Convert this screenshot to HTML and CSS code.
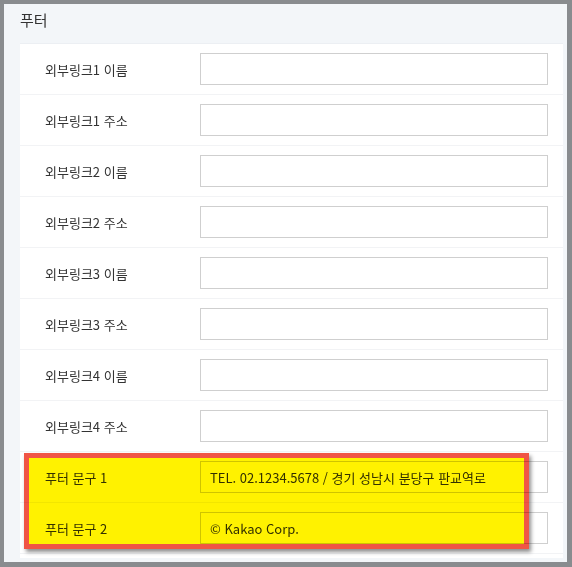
FILE: index.html
```html
<!DOCTYPE html>
<html lang="ko">
<head>
    <meta charset="UTF-8">
    <title>푸터 설정</title>
    <link rel="stylesheet" href="styles.css">
</head>
<body>

<div class="panel">
    <div class="panel-head">푸터</div>

    <div class="panel-body">
        <div class="form-row">
            <label>외부링크1 이름</label>
            <input type="text">
        </div>
        <div class="form-row">
            <label>외부링크1 주소</label>
            <input type="text">
        </div>
        <div class="form-row">
            <label>외부링크2 이름</label>
            <input type="text">
        </div>
        <div class="form-row">
            <label>외부링크2 주소</label>
            <input type="text">
        </div>
        <div class="form-row">
            <label>외부링크3 이름</label>
            <input type="text">
        </div>
        <div class="form-row">
            <label>외부링크3 주소</label>
            <input type="text">
        </div>
        <div class="form-row">
            <label>외부링크4 이름</label>
            <input type="text">
        </div>
        <div class="form-row">
            <label>외부링크4 주소</label>
            <input type="text">
        </div>
        <div class="form-row">
            <label>푸터 문구 1</label>
            <input type="text" value="TEL. 02.1234.5678 / 경기 성남시 분당구 판교역로">
        </div>
        <div class="form-row">
            <label>푸터 문구 2</label>
            <input type="text" value="© Kakao Corp.">
        </div>

        <!-- highlight box over the two footer rows -->
        <div class="highlight"></div>
    </div>
</div>

</body>
</html>
```

FILE: styles.css
```css
* {
    margin: 0;
    padding: 0;
    box-sizing: border-box;
}

body {
    font-family: "Noto Sans CJK KR", "Noto Sans", sans-serif;
    background-color: #898c8f;
    color: #333;
    padding: 4px 5px 5px 4px;
    height: 567px;
    overflow: hidden;
}

.panel {
    background-color: #f3f6f9;
    height: 558px;
    padding: 0 4px 0 16px;
}

.panel-head {
    height: 40px;
    font-size: 15px;
    line-height: 32px;
    padding-left: 0;
    color: #333;
    border-bottom: 1px solid #eceff3;
}

.panel-body {
    position: relative;
    background-color: #fff;
    height: 514px;
}

.form-row {
    display: flex;
    align-items: center;
    height: 51px;
    padding: 9px 0;
    border-bottom: 1px solid #f2f3f5;
}

.form-row label {
    width: 180px;
    padding-left: 25px;
    font-size: 13px;
    color: #333;
}

.form-row input[type="text"] {
    width: 348px;
    height: 32px;
    border: 1px solid #cfcfcf;
    padding: 0 9px;
    font-family: inherit;
    font-size: 13px;
    color: #333;
    background-color: #fff;
    outline: none;
}

.highlight {
    position: absolute;
    top: 409px;
    left: 4px;
    width: 505px;
    height: 96px;
    background-color: #fff200;
    border: 5px solid #f05545;
    box-shadow: 2px 3px 4px rgba(0, 0, 0, 0.45);
    mix-blend-mode: multiply;
}
```
